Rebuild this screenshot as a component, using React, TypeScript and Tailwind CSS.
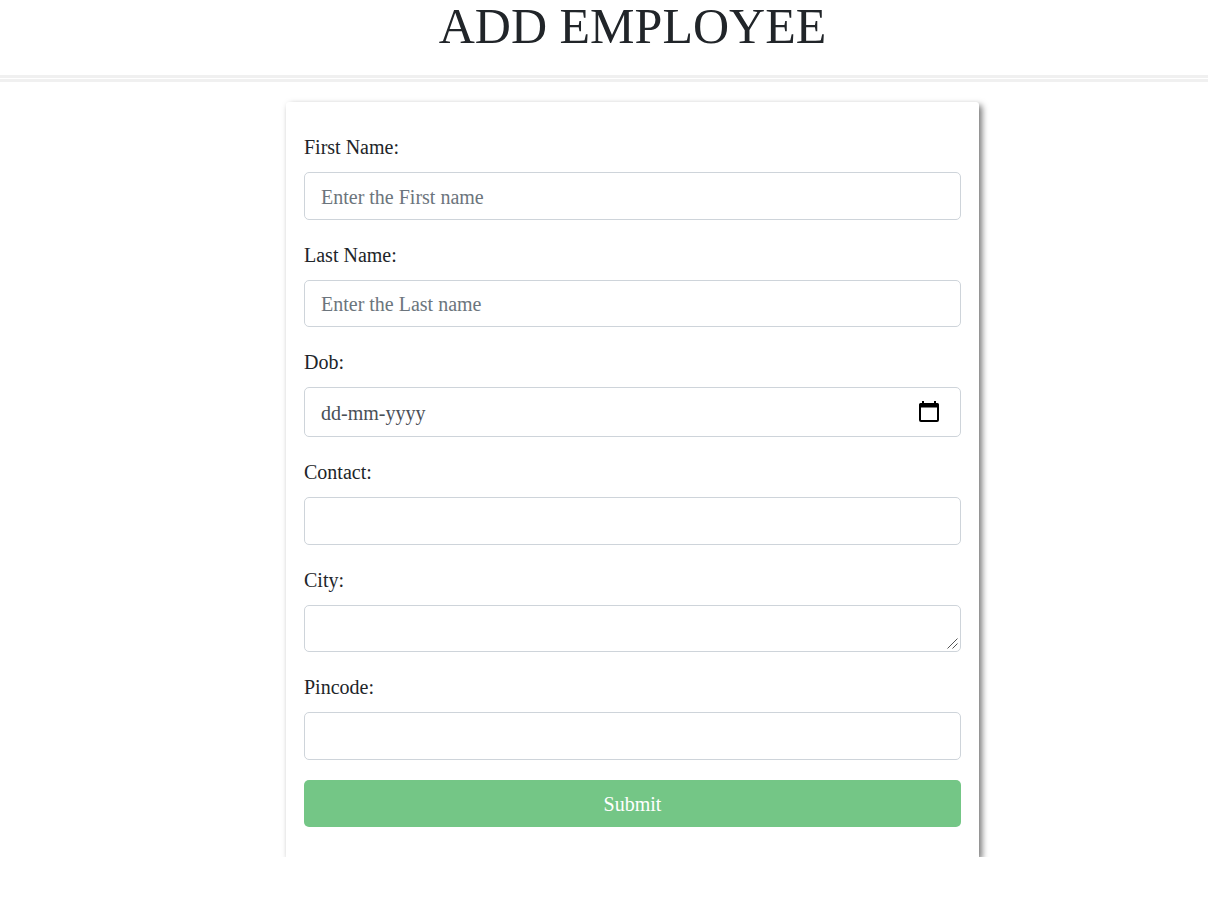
import type { ReactNode } from "react";

const control =
  "block w-full rounded-[5px] border border-[#ced4da] bg-white px-4 pt-0.5 text-[20px] leading-[30px] text-[#495057] outline-none placeholder:text-[#6c757d] placeholder:opacity-100 focus:border-[#80bdff]";

function Field({ id, label, children }: { id: string; label: string; children: ReactNode }) {
  return (
    <div>
      <label htmlFor={id} className="block pb-[10px] text-[20px] leading-[30px]">
        {label}
      </label>
      {children}
    </div>
  );
}

function CalendarIcon() {
  return (
    <svg viewBox="0 0 20 21" className="h-[21px] w-5" fill="#000" aria-hidden="true">
      <path
        fillRule="evenodd"
        d="M3 0h2v2h10V0h2v2h1.500a1.500 1.500 0 0 1 1.500 1.500v15.500a2 2 0 0 1-2 2H2a2 2 0 0 1-2-2V3.500a1.500 1.500 0 0 1 1.500-1.500H3zM2 6.500V19h16V6.500z"
      />
    </svg>
  );
}

export default function App() {
  return (
    <div className="min-h-screen bg-white font-['Liberation_Serif','Times_New_Roman',serif] text-[#212529]">
      <header>
        <h1 className="pb-[23px] pl-[57px] text-center text-[50px] leading-[52px]">ADD EMPLOYEE</h1>
        <div className="flex flex-col gap-px">
          <div className="h-[3px] bg-[#f0f0f0]" />
          <div className="h-[3px] bg-[#f0f0f0]" />
        </div>
      </header>
      <main className="overflow-hidden pt-5 pl-[57px]">
        <form
          onSubmit={(e) => e.preventDefault()}
          className="mx-auto w-full max-w-[693px] rounded-t-[3px] bg-white px-[18px] py-[30px] shadow-[3px_3px_6px_#777]"
        >
          <div className="flex flex-col gap-5">
            <Field id="first" label="First Name:">
              <input id="first" type="text" placeholder="Enter the First name" className={`${control} h-12`} />
            </Field>
            <Field id="last" label="Last Name:">
              <input id="last" type="text" placeholder="Enter the Last name" className={`${control} h-[47px]`} />
            </Field>
            <Field id="dob" label="Dob:">
              <div className="relative">
                <input
                  id="dob"
                  type="text"
                  placeholder="dd-mm-yyyy"
                  className={`${control} h-[50px] placeholder:text-[#495057]`}
                />
                <button
                  type="button"
                  aria-label="Open calendar"
                  className="absolute inset-y-0 right-[22px] flex items-center pb-0.5"
                >
                  <CalendarIcon />
                </button>
              </div>
            </Field>
            <Field id="contact" label="Contact:">
              <input id="contact" type="text" className={`${control} h-12`} />
            </Field>
            <Field id="city" label="City:">
              <div className="relative">
                <textarea id="city" rows={1} className={`${control} h-[47px] resize-none`} />
                <svg
                  viewBox="0 0 11 11"
                  className="pointer-events-none absolute right-[3px] bottom-[3px] size-[11px]"
                  stroke="#555"
                  fill="none"
                  aria-hidden="true"
                >
                  <path d="M0.500 10.500L10.500 0.500M5.500 10.500L10.500 5.500" />
                </svg>
              </div>
            </Field>
            <Field id="pincode" label="Pincode:">
              <input id="pincode" type="text" className={`${control} h-12`} />
            </Field>
            <button
              type="submit"
              className="h-[47px] w-full rounded-[5px] bg-[#74c686] pt-px text-[20px] leading-[30px] text-white"
            >
              Submit
            </button>
          </div>
        </form>
      </main>
    </div>
  );
}
